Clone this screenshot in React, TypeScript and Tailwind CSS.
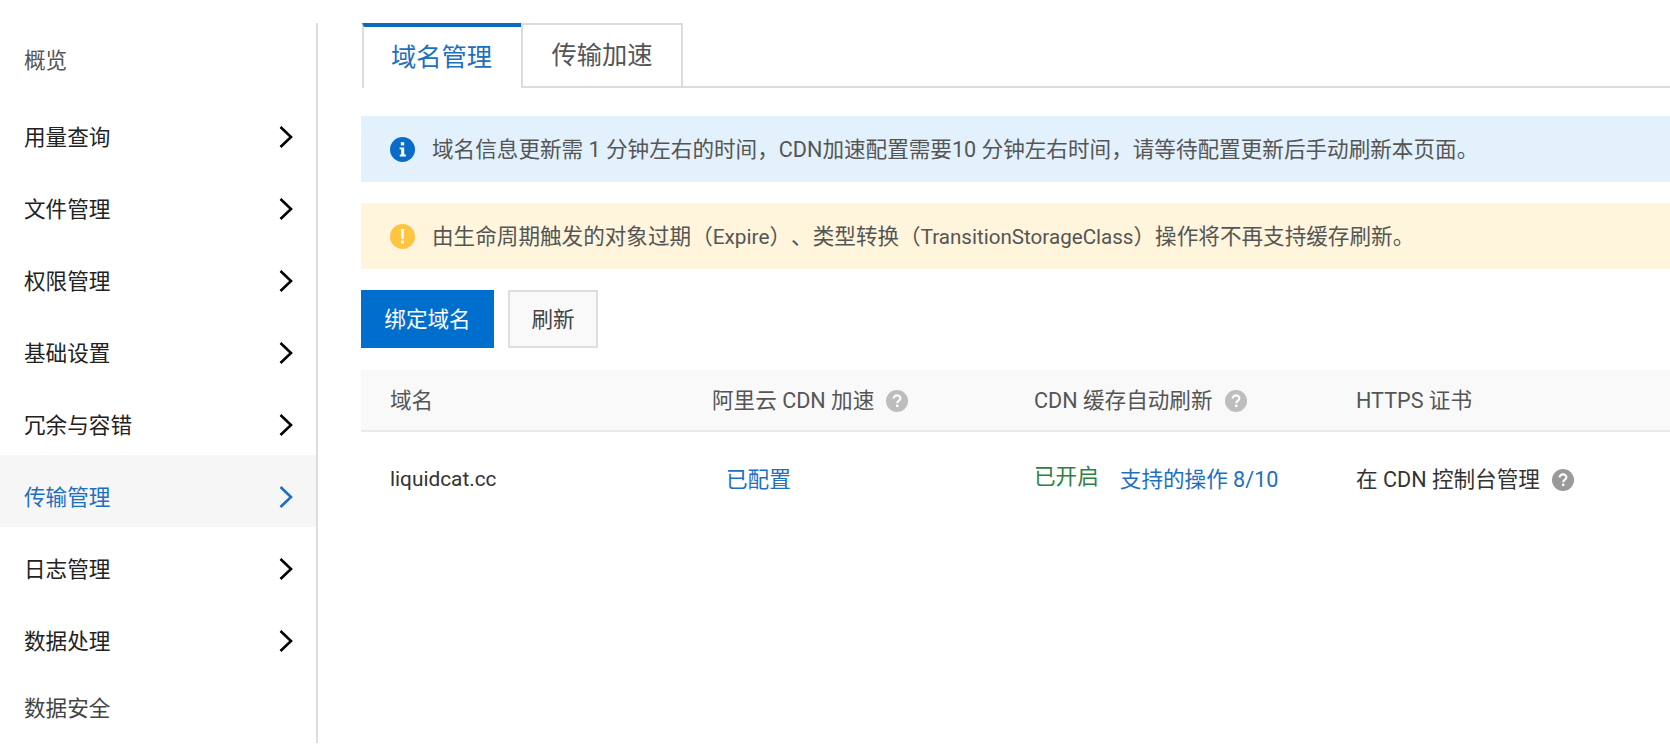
import type { ReactNode } from "react"

const navItems = [
    { label: "用量查询" },
    { label: "文件管理" },
    { label: "权限管理" },
    { label: "基础设置" },
    { label: "冗余与容错" },
    { label: "传输管理", active: true },
    { label: "日志管理" },
    { label: "数据处理" },
]

const Chevron = () => (
    <svg width="14" height="22" viewBox="0 0 14 22" fill="none" stroke="currentColor" strokeWidth="2.6">
        <path d="M1.5 1 L12 11 L1.5 21" />
    </svg>
)

const Help = ({ color }: { color: string }) => (
    <svg width="22" height="22" viewBox="0 0 22 22" className={color}>
        <circle cx="11" cy="11" r="11" fill="currentColor" />
        <path d="M7.6 8.6 C7.6 6.6 9.1 5.4 11 5.4 C13 5.4 14.4 6.6 14.4 8.4 C14.4 10.6 11.2 10.8 11.2 13.2" fill="none" stroke="white" strokeWidth="2.1" />
        <rect x="10" y="14.6" width="2.4" height="2.4" fill="white" />
    </svg>
)

const InfoIcon = () => (
    <svg width="25" height="25" viewBox="0 0 25 25">
        <circle cx="12.5" cy="12.5" r="12.5" fill="#0a6cc9" />
        <rect x="10.8" y="5.2" width="3.4" height="3.2" fill="white" />
        <path d="M9.6 10.4 H14.2 V17.6 H15.8 V19.4 H9.8 V17.6 H11.2 V12.2 H9.6 Z" fill="white" />
    </svg>
)

const WarnIcon = () => (
    <svg width="25" height="25" viewBox="0 0 25 25">
        <circle cx="12.5" cy="12.5" r="12.5" fill="#ffc440" />
        <path d="M10.9 5 H14.1 L13.5 15 H11.5 Z" fill="white" />
        <rect x="11" y="16.6" width="3" height="3" fill="white" />
    </svg>
)

const Notice = ({ icon, bg, children }: { icon: ReactNode; bg: string; children: ReactNode }) => (
    <div className={`h-[66px] flex items-center pl-[29px] gap-[17px] text-[#555] ${bg}`}>
        {icon}
        <span className="pt-[2px]">{children}</span>
    </div>
)

const App = () => {
    return (
        <div className="flex h-[756px] overflow-hidden bg-white text-[21.6px] text-[#333] [text-spacing-trim:space-all] font-['Roboto','Noto_Sans_CJK_SC',sans-serif]">
            <div className="w-[318px] h-[720px] mt-[23px] shrink-0 border-r-[2px] border-[#dcdcdc]">
                <div className="h-[72px] pl-[24px] pt-[22px] text-[#555]">概览</div>
                {navItems.map((item) => (
                    <div key={item.label} className={`h-[72px] pl-[24px] pr-[23px] flex items-center justify-between ${item.active ? "bg-[#f6f6f6] text-[#1d6fc0]" : "text-[#222]"}`}>
                        <span className="relative top-[7px]">{item.label}</span>
                        <span className={`relative top-[6px] ${item.active ? "text-[#1d6fc0]" : "text-black"}`}><Chevron /></span>
                    </div>
                ))}
                <div className="pl-[24px] pt-[22px] text-[#444]">数据安全</div>
            </div>

            <div className="flex-1 min-w-0 pl-[43px] pt-[23px]">
                <div className="flex h-[65px] border-b-[2px] border-[#dcdcdc] text-[25.3px] ml-px">
                    <div className="w-[159px] h-[65px] border-t-[4px] border-t-[#0a6cc0] border-l-[2px] border-l-[#dcdcdc] bg-white text-[#1d6fc0] flex items-center justify-center pr-[2px]">域名管理</div>
                    <div className="w-[162px] h-[64px] border-2 border-b-0 border-[#dcdcdc] text-[#555] flex items-center justify-center">传输加速</div>
                </div>

                <div className="mt-[28px] flex flex-col gap-[21px]">
                    <Notice icon={<InfoIcon />} bg="bg-[#e3f1fc]">
                        域名信息更新需 1 分钟左右的时间，CDN加速配置需要10 分钟左右时间，请等待配置更新后手动刷新本页面。
                    </Notice>
                    <Notice icon={<WarnIcon />} bg="bg-[#fef5dc]">
                        由生命周期触发的对象过期（<span className="text-[20.8px]">Expire</span>）、类型转换（<span className="text-[20.6px]">TransitionStorageClass</span>）操作将不再支持缓存刷新。
                    </Notice>
                </div>

                <div className="mt-[21px] flex gap-[14px] h-[58px]">
                    <button className="w-[133px] pt-[2px] bg-[#006ecc] text-white">绑定域名</button>
                    <button className="w-[90px] pt-[2px] bg-[#f9f9f9] border-2 border-[#dedede] text-[#444]">刷新</button>
                </div>

                <div className="mt-[22px] h-[62px] pt-[3px] bg-[#f9f9f9] border-b-2 border-[#eaeaea] text-[#555] grid grid-cols-[322px_322px_322px_1fr] items-center">
                    <div className="pl-[29px]">域名</div>
                    <div className="pl-[29px] flex items-center gap-[12px]">阿里云 CDN 加速 <Help color="text-[#bdbdbd]" /></div>
                    <div className="pl-[29px] flex items-center gap-[12px]">CDN 缓存自动刷新 <Help color="text-[#bdbdbd]" /></div>
                    <div className="pl-[29px]">HTTPS 证书</div>
                </div>
                <div className="h-[92px] pt-[4px] grid grid-cols-[322px_322px_322px_1fr] items-center">
                    <div className="pl-[29px] text-[#333] text-[20.8px]">liquidcat.cc</div>
                    <div className="pl-[43px] text-[#1d6fc0]">已配置</div>
                    <div className="pl-[29px] flex items-center gap-[21px]">
                        <span className="text-[#2f8040] relative -top-[3px]">已开启</span>
                        <span className="text-[#1d6fc0]">支持的操作 8/10</span>
                    </div>
                    <div className="pl-[29px] flex items-center gap-[12px] text-[#333]">在 CDN 控制台管理 <Help color="text-[#9a9a9a]" /></div>
                </div>
            </div>
        </div>
    )
}

export default App
